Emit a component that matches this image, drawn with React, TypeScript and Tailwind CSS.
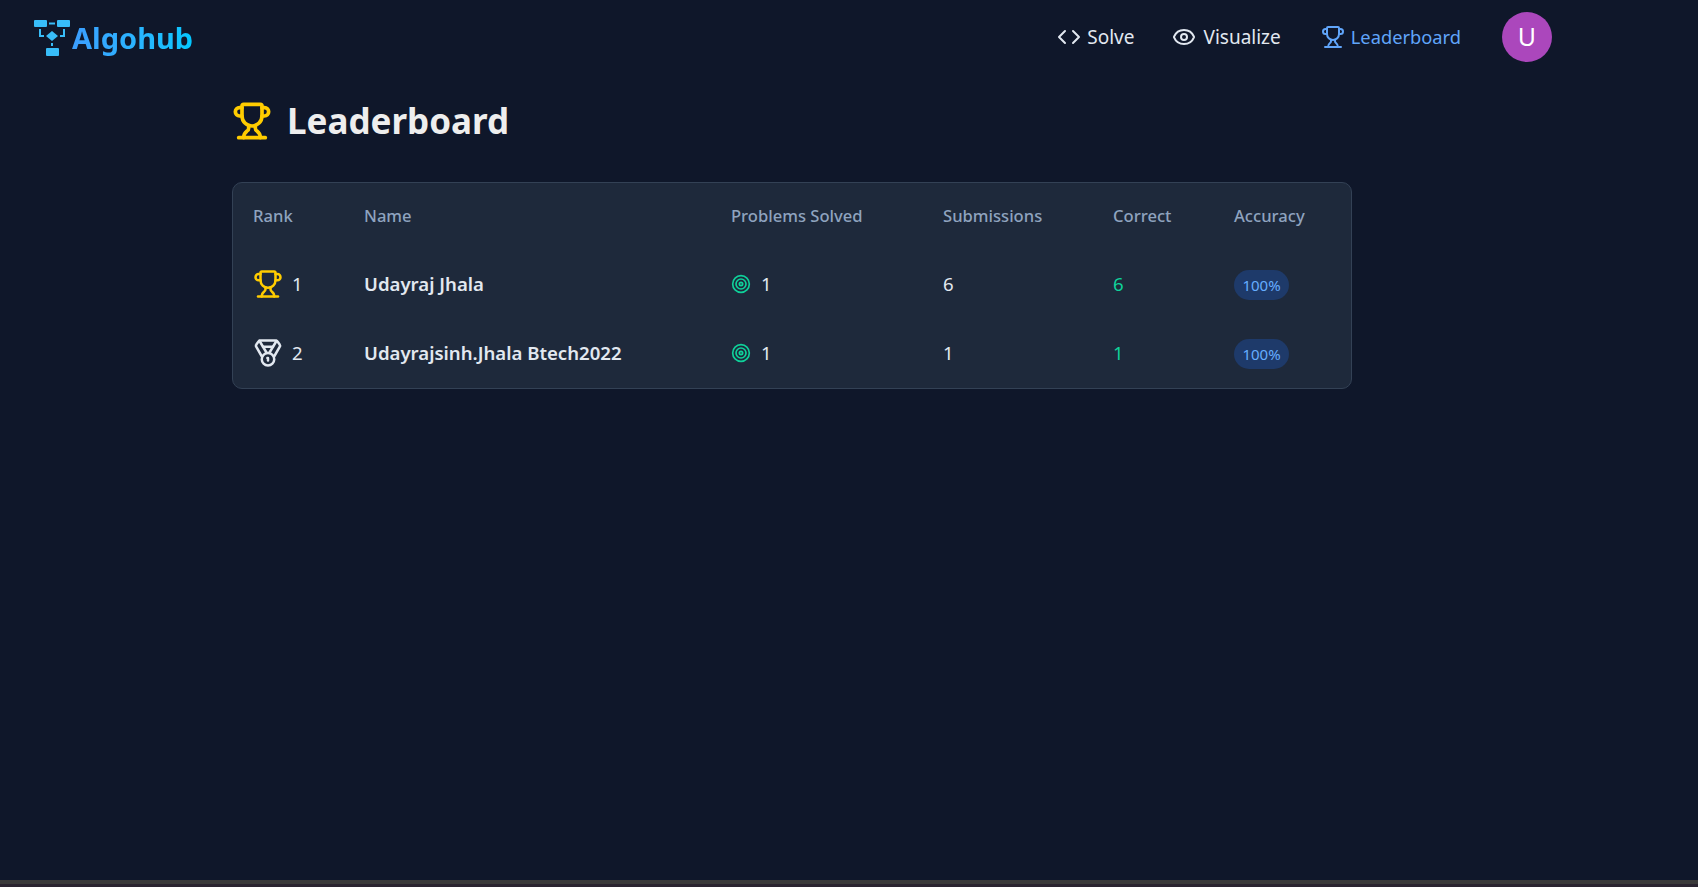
import React from 'react';
import { Code, Eye, Medal, Target, Trophy } from 'lucide-react';

interface Row {
  rank: number;
  name: string;
  solved: number;
  submissions: number;
  correct: number;
  accuracy: string;
}

const rows: Row[] = [
  { rank: 1, name: 'Udayraj Jhala', solved: 1, submissions: 6, correct: 6, accuracy: '100%' },
  { rank: 2, name: 'Udayrajsinh.Jhala Btech2022', solved: 1, submissions: 1, correct: 1, accuracy: '100%' },
];

const Logo = () => (
  <svg width="36" height="36" viewBox="0 0 36 36" fill="none" className="shrink-0">
    <rect x="0" y="0" width="13" height="7" rx="1" fill="#38bdf8" />
    <rect x="23" y="0" width="13" height="7" rx="1" fill="#38bdf8" />
    <rect x="15" y="2.5" width="6" height="2" fill="#38bdf8" />
    <rect x="12" y="28" width="13" height="8" rx="1" fill="#38bdf8" />
    <path d="M18 11l6 5-6 5-6-5z" fill="#38bdf8" />
    <path d="M6 9v7h4M30 9v7h-4M18 23v3" stroke="#38bdf8" strokeWidth="2" />
  </svg>
);

export default function App() {
  return (
    <div className="min-h-[887px] h-[887px] overflow-hidden flex flex-col bg-[#0f172a] font-['Noto_Sans','Open_Sans',sans-serif] text-[#e2e8f0]">
      <nav className="h-[74px] shrink-0 flex items-center pl-[34px] pr-[146px]">
        <div className="flex items-center gap-[2px] mt-[2px]">
          <Logo />
          <span className="text-[29px] font-bold bg-gradient-to-r from-[#3b9eff] to-[#00c8ff] bg-clip-text text-transparent">
            Algohub
          </span>
        </div>
        <div className="ml-auto flex items-center text-[18.3px]">
          <a className="flex items-center gap-[6px] text-[19px] text-[#e2e8f0]">
            <Code size={24} strokeWidth={2} />
            Solve
          </a>
          <a className="flex items-center gap-[7px] ml-[38px] text-[19px] text-[#e2e8f0]">
            <Eye size={24} strokeWidth={2} />
            Visualize
          </a>
          <a className="flex items-center gap-[6px] ml-[40px] text-[#60a5fa]">
            <Trophy size={24} strokeWidth={2} />
            Leaderboard
          </a>
          <div className="ml-[41px] w-[50px] h-[50px] rounded-full bg-[#ab47bc] flex items-center justify-center text-white text-[25px]">
            U
          </div>
        </div>
      </nav>

      <main className="ml-[232px] w-[1120px]">
        <div className="flex items-center gap-[15px] mt-[24px] h-[46px]">
          <Trophy size={40} strokeWidth={2.2} className="text-[#ffcc00]" />
          <h1 className="text-[35px] font-bold text-[#eeeeee]">Leaderboard</h1>
        </div>

        <div className="mt-[38px] bg-[#1e293b] border border-[#334155] rounded-[10px] overflow-hidden">
          <table className="w-full table-fixed border-collapse">
            <thead>
              <tr className="h-[66px] text-left text-[16.6px] text-[#8fa3bf]">
                <th className="w-[111px] pl-[20px] font-medium">Rank</th>
                <th className="w-[367px] pl-[20px] font-medium">Name</th>
                <th className="w-[212px] pl-[20px] font-medium">Problems Solved</th>
                <th className="w-[170px] pl-[20px] font-medium">Submissions</th>
                <th className="w-[121px] pl-[20px] font-medium">Correct</th>
                <th className="pl-[20px] font-medium">Accuracy</th>
              </tr>
            </thead>
            <tbody>
              {rows.map((row) => (
                <tr key={row.rank} className="h-[69.5px] text-[18.6px]">
                  <td className="pl-[20px]">
                    <div className="flex items-center gap-[9px]">
                      {row.rank === 1 ? (
                        <Trophy size={30} strokeWidth={2} className="text-[#ffcc00]" />
                      ) : (
                        <Medal size={30} strokeWidth={2} className="text-[#e2e8f0]" />
                      )}
                      {row.rank}
                    </div>
                  </td>
                  <td className="pl-[20px] font-semibold">{row.name}</td>
                  <td className="pl-[20px]">
                    <div className="flex items-center gap-[10px]">
                      <Target size={20} strokeWidth={2} className="text-[#0fd19a]" />
                      {row.solved}
                    </div>
                  </td>
                  <td className="pl-[20px]">{row.submissions}</td>
                  <td className="pl-[20px] text-[#0fd19a]">{row.correct}</td>
                  <td className="pl-[20px]">
                    <span className="inline-flex items-center justify-center mt-[2px] w-[55px] h-[30px] rounded-full bg-[#1e3a6a] text-[#66adff] text-[15px]">
                      {row.accuracy}
                    </span>
                  </td>
                </tr>
              ))}
            </tbody>
          </table>
        </div>
      </main>

      <div className="mt-auto h-[7px] shrink-0 flex flex-col">
        <div className="h-[4px] bg-[#3a3a3a]" />
        <div className="h-[3px] bg-[#2a2430]" />
      </div>
    </div>
  );
}
